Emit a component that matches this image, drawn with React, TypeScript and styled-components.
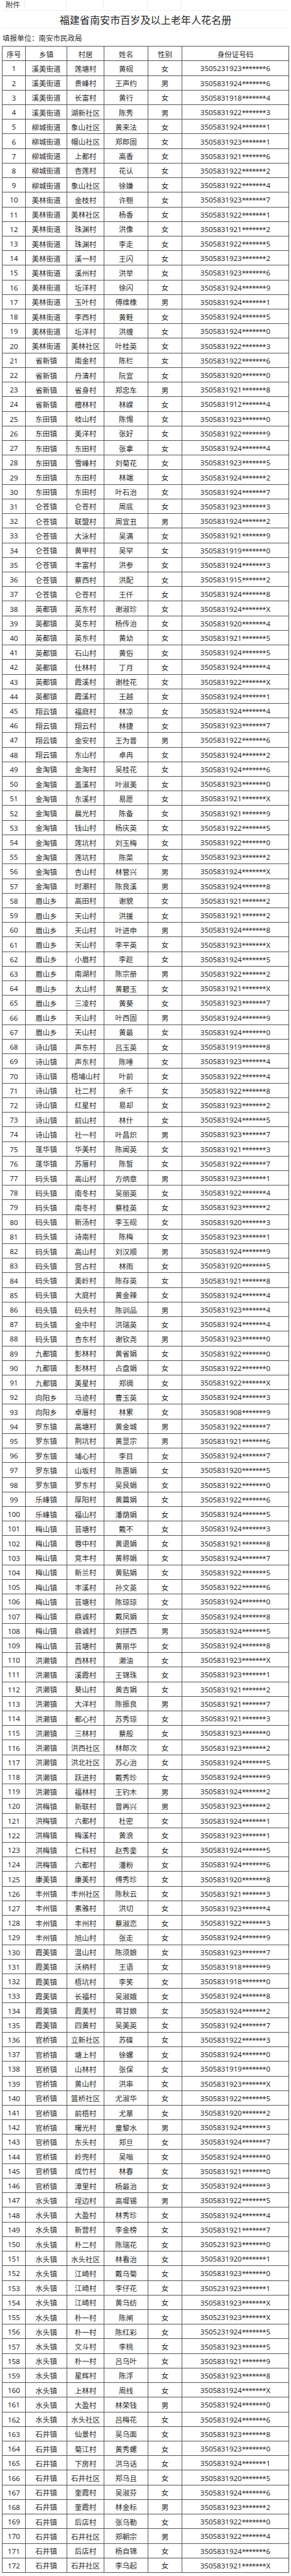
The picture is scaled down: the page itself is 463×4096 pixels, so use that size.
import React from "react";
import styled, { createGlobalStyle } from "styled-components";

const Global = createGlobalStyle`
  html, body { margin: 0; padding: 0; background: #ffffff; }
  body { font-family: "Noto Sans", "Noto Sans CJK SC", sans-serif; color: #2b2b2b; }
  * { box-sizing: border-box; }
`;

const RAW = `溪美街道 莲塘村 黄砚 女 3505231923 6
溪美街道 贵峰村 王声约 男 3505831924 6
溪美街道 长富村 黄行 女 3505831918 4
溪美街道 湖新社区 陈秀 男 3505831922 3
柳城街道 象山社区 黄来法 女 3505831924 1
柳城街道 帽山社区 郑郎固 女 3505831923 1
柳城街道 上都村 高香 女 3505831921 6
柳城街道 杏莲村 花认 女 3505831922 2
柳城街道 象山社区 徐嫌 女 3505831922 4
美林街道 金枝村 许匏 女 3505831923 7
美林街道 美林社区 杨香 女 3505831922 1
美林街道 珠渊村 洪像 女 3505831921 2
美林街道 珠渊村 李走 女 3505831922 5
美林街道 溪一村 王闪 女 3505831923 2
美林街道 溪州村 洪举 女 3505831923 6
美林街道 坵洋村 徐闪 女 3505831924 9
美林街道 玉叶村 傅维橡 男 3505831924 1
美林街道 李西村 黄鞋 女 3505831924 5
美林街道 坵洋村 洪缠 女 3505831924 0
美林街道 美林社区 叶桂英 女 3505831922 3
省新镇 南金村 陈栏 女 3505831922 6
省新镇 丹清村 阮宜 女 3505831920 0
省新镇 省身村 郑忠车 男 3505831921 8
省新镇 檀林村 林嵘 女 3505831912 4
东田镇 岐山村 陈惕 女 3505831923 0
东田镇 美洋村 张好 女 3505831922 9
东田镇 东田村 张拿 女 3505831924 4
东田镇 雪峰村 刘菊花 女 3505831923 5
东田镇 东田村 林端 女 3505831924 2
东田镇 东田村 叶石治 女 3505831924 7
仑苍镇 仑苍村 周底 女 3505831923 3
仑苍镇 联盟村 周宜丑 男 3505831924 2
仑苍镇 大泳村 吴满 女 3505831921 9
仑苍镇 黄甲村 吴罕 女 3505831919 0
仑苍镇 丰富村 洪参 女 3505831924 3
仑苍镇 蔡西村 洪配 女 3505831915 2
仑苍镇 仑苍村 王仟 女 3505831924 8
英都镇 英东村 谢淑珍 女 3505831924 X
英都镇 英东村 杨传治 女 3505831920 4
英都镇 英东村 黄幼 女 3505831921 5
英都镇 石山村 黄俗 女 3505831924 5
英都镇 仕林村 丁月 女 3505831924 4
英都镇 霞溪村 谢桂花 女 3505831922 X
英都镇 霞溪村 王越 女 3505831924 1
翔云镇 福庭村 林凉 女 3505831924 4
翔云镇 翔云村 林捷 女 3505831923 7
翔云镇 金安村 王为普 男 3505831922 6
翔云镇 东山村 卓冉 女 3505831924 2
金淘镇 金淘村 吴桂花 女 3505831924 6
金淘镇 盖溪村 叶淑美 女 3505831923 0
金淘镇 东溪村 易愿 女 3505831921 X
金淘镇 晨光村 陈备 女 3505831921 9
金淘镇 钱山村 杨庆英 女 3505831922 5
金淘镇 莲坑村 刘玉梅 女 3505831922 0
金淘镇 莲坑村 陈菜 女 3505831923 2
金淘镇 杏山村 林管兴 男 3505831924 X
金淘镇 时潮村 陈良溪 男 3505831924 8
眉山乡 高田村 谢貌 女 3505831921 2
眉山乡 天山村 洪援 女 3505831921 2
眉山乡 天山村 叶进申 男 3505831924 8
眉山乡 天山村 李平英 女 3505831923 X
眉山乡 小眉村 李趁 女 3505831924 5
眉山乡 南湖村 陈宗册 男 3505831922 2
眉山乡 太山村 黄碧玉 女 3505831921 X
眉山乡 三凌村 黄葵 女 3505831923 7
眉山乡 天山村 叶西固 男 3505831924 9
眉山乡 天山村 黄最 女 3505831924 0
诗山镇 声东村 吕玉英 女 3505831919 8
诗山镇 声东村 陈唾 女 3505831923 4
诗山镇 梧埔山村 叶前 女 3505831922 4
诗山镇 社二村 余千 女 3505831922 8
诗山镇 红星村 易却 女 3505831923 2
诗山镇 前山村 林什 女 3505831924 5
诗山镇 社一村 叶昌炽 男 3505831923 7
蓬华镇 华美村 陈闻英 女 3505831921 3
蓬华镇 苏厝村 陈晳 女 3505831922 7
码头镇 高山村 方炳章 男 3505831923 1
码头镇 南冬村 吴丽英 女 3505831922 4
码头镇 南冬村 蔡桂英 女 3505831923 2
码头镇 新汤村 李玉砚 女 3505831920 3
码头镇 诗南村 陈梅 女 3505831923 1
码头镇 高山村 刘汉顺 男 3505831924 9
码头镇 宫占村 林雨 女 3505831920 5
码头镇 美岭村 陈存英 女 3505831921 8
码头镇 大庭村 黄金辣 女 3505831924 4
码头镇 码头村 陈训品 男 3505831923 4
码头镇 金中村 洪瑞英 女 3505831924 4
码头镇 杏东村 谢钦尧 男 3505831923 0
九都镇 彭林村 黄省娟 女 3505831922 0
九都镇 彭林村 占盘娟 女 3505831922 0
九都镇 美星村 郑绸 女 3505831922 X
向阳乡 马迹村 曹玉英 女 3505831924 3
向阳乡 卓厝村 林累 女 3505831908 9
罗东镇 高塘村 黄金城 男 3505831922 7
罗东镇 荆坑村 黄显宗 男 3505831921 6
罗东镇 埔心村 李目 女 3505831924 7
罗东镇 山坂村 陈惠娟 女 3505831920 5
罗东镇 罗东村 吴艮娟 女 3505831922 0
乐峰镇 厚阳村 黄篇娟 女 3505831922 6
乐峰镇 福山村 潘荫娟 女 3505831924 5
梅山镇 芸塘村 戴不 女 3505831924 3
梅山镇 蓉中村 黄退娟 女 3505831921 8
梅山镇 竞丰村 黄称娟 女 3505831924 7
梅山镇 新兰村 黄贴娟 女 3505831922 5
梅山镇 丰溪村 孙文英 女 3505831922 6
梅山镇 芸塘村 陈琼琼 女 3505831924 0
梅山镇 鼎诚村 戴凤娟 女 3505831924 8
梅山镇 鼎诚村 刘拼西 男 3505831924 5
梅山镇 芸塘村 黄丽华 女 3505831924 8
洪濑镇 西林村 濑油 女 3505831923 X
洪濑镇 溪霞村 王锦珠 女 3505831923 1
洪濑镇 葵山村 黄吉娟 女 3505831921 2
洪濑镇 大洋村 陈振良 男 3505831921 7
洪濑镇 都心村 苏秀琼 女 3505831921 3
洪濑镇 三林村 蔡般 女 3505831923 0
洪濑镇 洪西社区 林郎次 女 3505831923 2
洪濑镇 洪北社区 苏心治 女 3505831924 5
洪濑镇 跃进村 戴秀珍 女 3505831924 9
洪濑镇 福林村 王钓木 男 3505831924 2
洪梅镇 新联村 曾再兴 男 3505831923 2
洪梅镇 六都村 杜密 女 3505831924 1
洪梅镇 梅溪村 黄浪 女 3505831923 1
洪梅镇 仁科村 赵秀銮 女 3505831924 5
洪梅镇 六都村 潘粉 女 3505831924 6
康美镇 康美村 傅秀珍 女 3505831920 8
丰州镇 丰州社区 陈秋云 女 3505831921 3
丰州镇 素雅村 洪切 女 3505831923 4
丰州镇 丰州村 蔡淑恋 女 3505831922 3
丰州镇 旭山村 张走 女 3505831924 9
霞美镇 温山村 陈须娘 女 3505831923 7
霞美镇 沃柄村 王语 女 3505831918 9
霞美镇 梧坑村 李笑 女 3505831918 0
霞美镇 长福村 吴淑娥 女 3505831924 8
霞美镇 霞美村 蒋甘娘 女 3505831924 2
霞美镇 四黄村 吴美英 女 3505831924 7
官桥镇 立新社区 苏碟 女 3505831922 3
官桥镇 塘上村 徐螺 女 3505831924 0
官桥镇 山林村 张保 女 3505831919 0
官桥镇 黄山村 洪串 女 3505831923 X
官桥镇 篮桥社区 尤淑华 女 3505831922 5
官桥镇 前梧村 尤箪 女 3505831920 2
官桥镇 曙光村 童黎水 男 3505831924 3
官桥镇 东头村 郑旦 女 3505831924 7
官桥镇 岭兜村 吴嗡 女 3505831924 0
官桥镇 成竹村 林春 女 3505831921 0
官桥镇 漳里村 杨最治 女 3505831924 3
水头镇 埕边村 高墀锡 男 3505831922 5
水头镇 大盈村 林秀珍 女 3505831924 4
水头镇 新营村 李金榜 女 3505831921 7
水头镇 朴二村 陈瑞花 女 3505231923 0
水头镇 水头社区 林看治 女 3505831920 1
水头镇 江崎村 戴乌菊 女 3505831923 0
水头镇 江崎村 李仔花 女 3505231923 1
水头镇 江崎村 黄乌纺 女 3505831923 X
水头镇 朴一村 陈闸 女 3505231923 X
水头镇 朴一村 陈红彩 女 3505231924 5
水头镇 文斗村 李桃 女 3505831923 5
水头镇 朴一村 吕乌叶 女 3505831921 9
水头镇 星辉村 陈浮 女 3505831923 8
水头镇 上林村 周线 女 3505831924 X
水头镇 大盈村 林荣钱 男 3505831924 0
水头镇 水头社区 吕梅花 女 3505831924 6
石井镇 仙景村 吴乌面 女 3505831923 8
石井镇 菊江村 黄秀螺 女 3505831923 0
石井镇 下房村 洪乌话 女 3505831924 1
石井镇 石井社区 郑乌且 女 3505831920 5
石井镇 奎霞村 吴淑芬 女 3505831924 6
石井镇 奎霞村 林金标 男 3505831923 2
石井镇 后店村 张乌勒 女 3505831922 0
石井镇 石井社区 郑朝宗 男 3505831922 4
石井镇 后店村 杨自锦 女 3505831924 6
石井镇 石井社区 李乌起 女 3505831921 X`;

type Row = { town: string; village: string; name: string; sex: string; head: string; tail: string };

const rows: Row[] = RAW.split("\n").map((l) => {
  const [town, village, name, sex, head, tail] = l.trim().split(" ");
  return { town, village, name, sex, head, tail };
});

const COLS = "37px 66px 59px 70px 54px 1fr";

const Page = styled.div`
  width: 463px;
  padding: 0 3px;
`;

const NoteRow = styled.div`
  display: grid;
  grid-template-columns: ${COLS};
  height: 16.7px;
  border-bottom: 1px solid #efefef;
`;

const NoteCell = styled.div<{ $last?: boolean }>`
  border-right: ${(p) => (p.$last ? "none" : "1px solid #f0f0f0")};
  font-size: 11.5px;
  line-height: 16px;
  padding-left: 6px;
  color: #333;
  white-space: nowrap;
`;

const TitleRow = styled.div`
  height: 28.7px;
  display: flex;
  align-items: center;
  justify-content: center;
  border-bottom: 1px solid #f2f2f2;
  font-size: 16px;
  color: #262626;
  letter-spacing: 0.1px;
`;

const UnitRow = styled.div`
  height: 27.8px;
  display: flex;
  align-items: center;
  padding-left: 1px;
  padding-top: 1px;
  font-size: 11.5px;
  color: #2b2b2b;
`;

const Table = styled.div`
  border-top: 1px solid #555;
  border-left: 1px solid #555;
`;

const TR = styled.div<{ $h: number }>`
  display: grid;
  grid-template-columns: ${COLS};
  height: ${(p) => p.$h}px;
`;

const TD = styled.div`
  border-right: 1px solid #555;
  border-bottom: 1px solid #555;
  display: flex;
  align-items: center;
  justify-content: center;
  font-size: 11.5px;
  color: #2b2b2b;
  white-space: nowrap;
  overflow: hidden;
  padding-top: 1px;
`;

const Stars = styled.span`
  letter-spacing: -0.9px;
  margin-right: 0.9px;
`;

export default function App() {
  return (
    <Page>
      <Global />
      <NoteRow>
        <NoteCell>附件</NoteCell>
        <NoteCell />
        <NoteCell />
        <NoteCell />
        <NoteCell />
        <NoteCell $last />
      </NoteRow>
      <TitleRow>福建省南安市百岁及以上老年人花名册</TitleRow>
      <UnitRow>填报单位：南安市民政局</UnitRow>
      <Table>
        <TR $h={23.15}>
          <TD>序号</TD>
          <TD>乡镇</TD>
          <TD>村居</TD>
          <TD>姓名</TD>
          <TD>性别</TD>
          <TD>身份证号码</TD>
        </TR>
        {rows.map((r, i) => (
          <TR key={i} $h={23.225}>
            <TD>{i + 1}</TD>
            <TD>{r.town}</TD>
            <TD>{r.village}</TD>
            <TD>{r.name}</TD>
            <TD>{r.sex}</TD>
            <TD>
              {r.head}
              <Stars>*******</Stars>
              {r.tail}
            </TD>
          </TR>
        ))}
      </Table>
    </Page>
  );
}
